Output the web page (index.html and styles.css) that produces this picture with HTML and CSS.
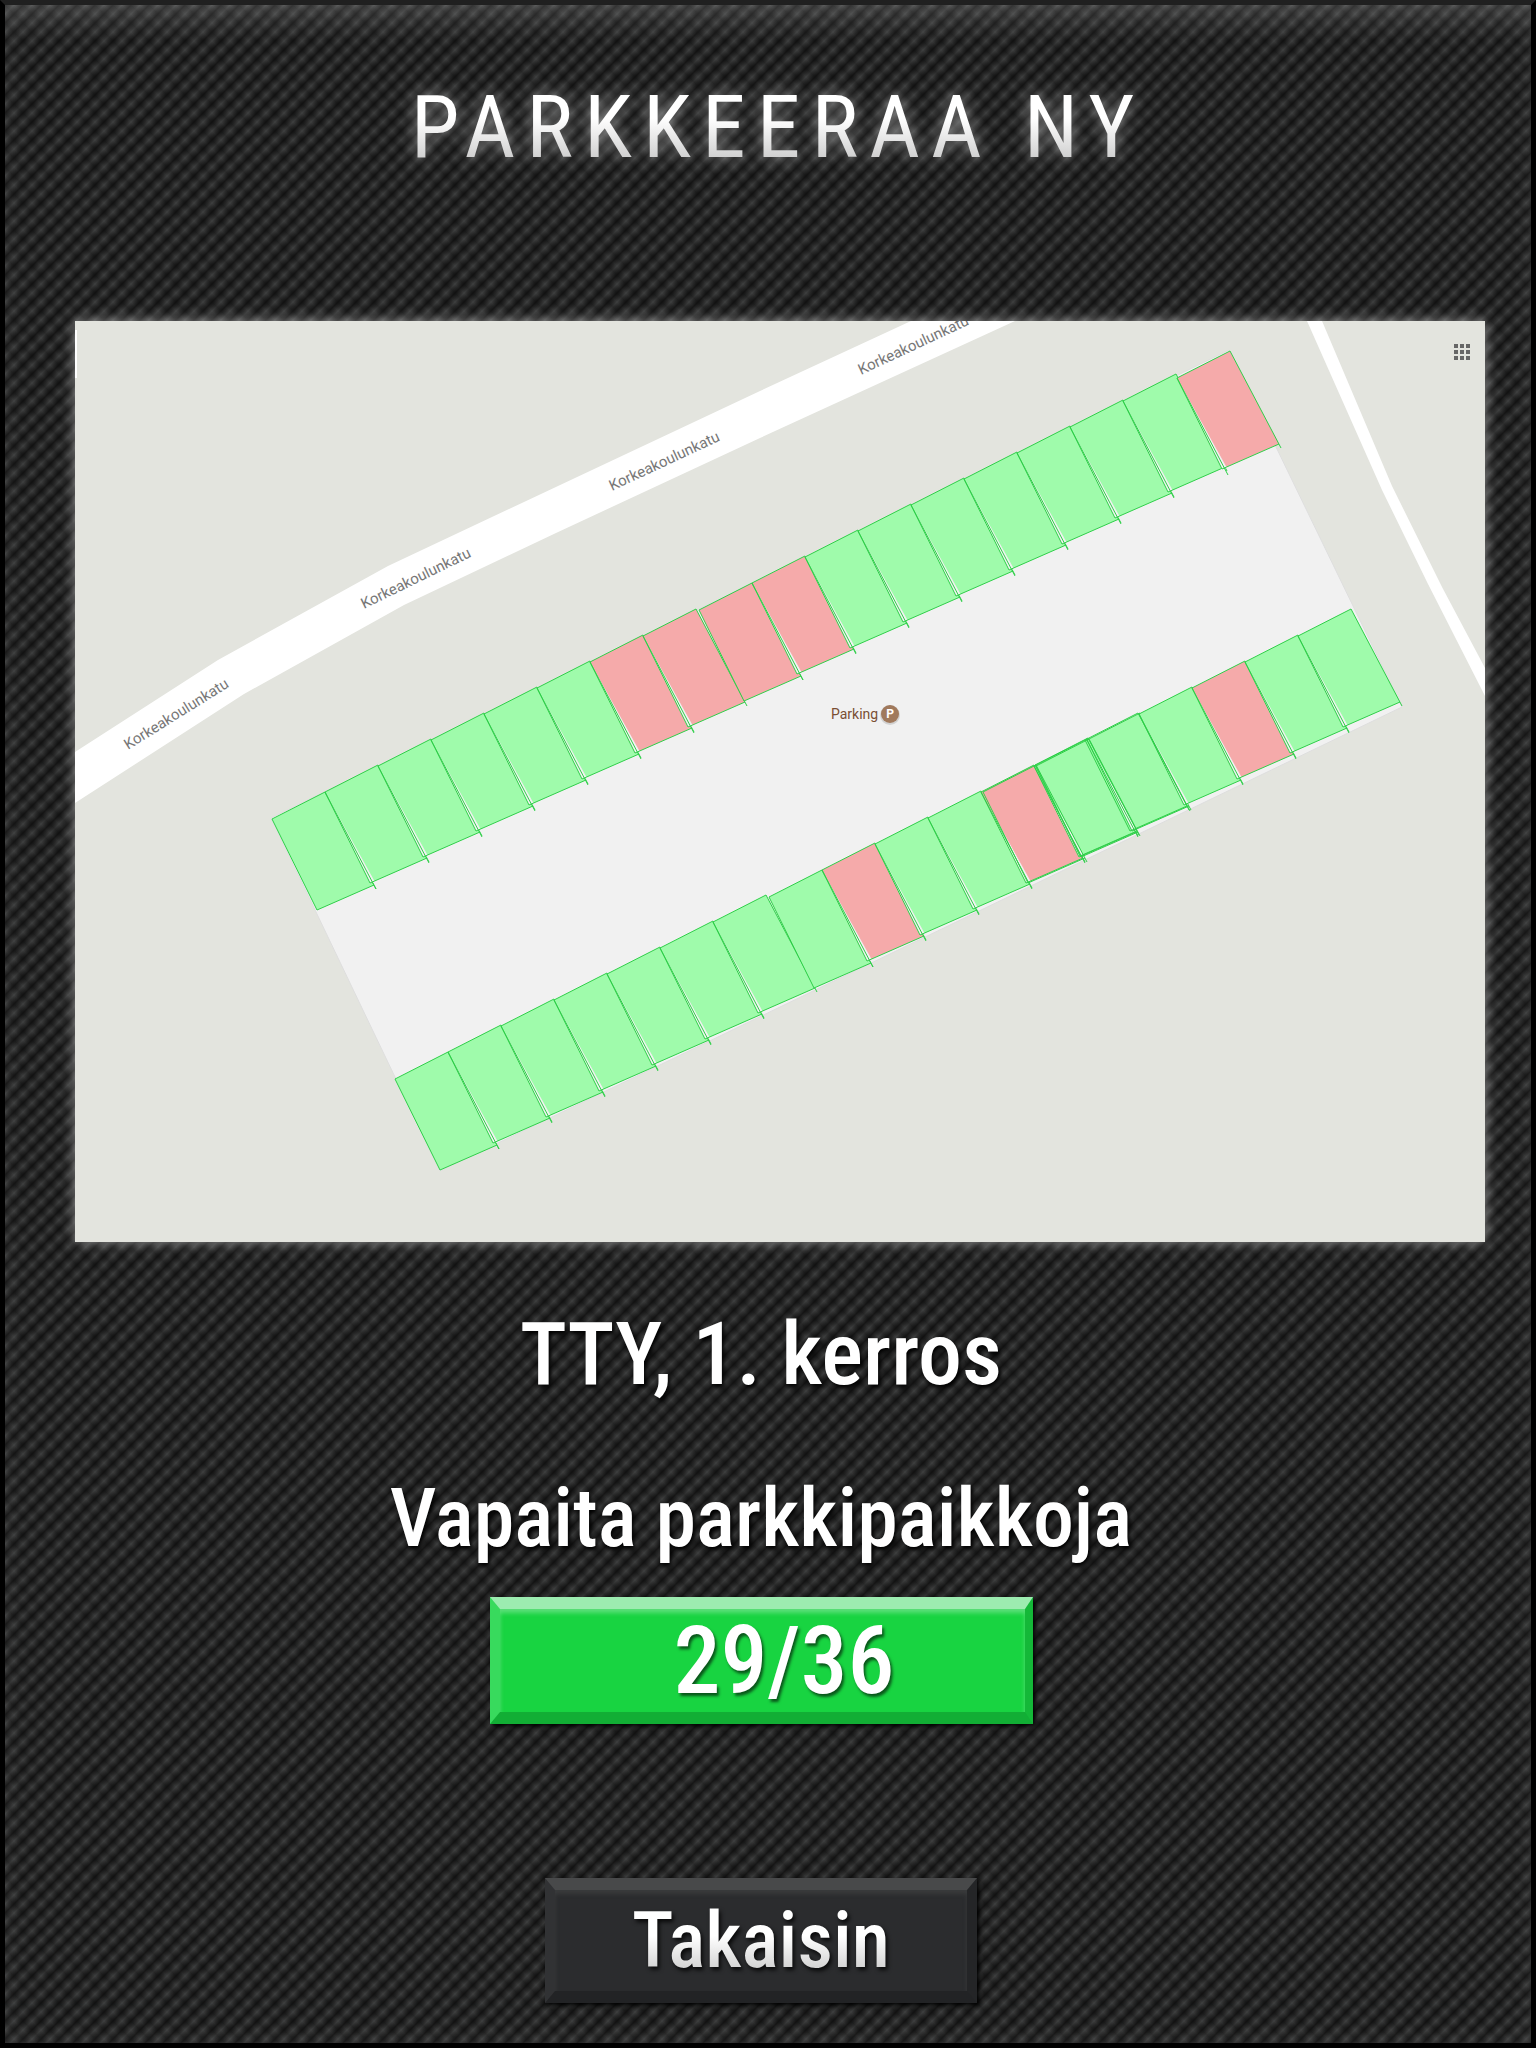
FILE: index.html
```
<!DOCTYPE html>
<html lang="fi">
<head>
<meta charset="utf-8">
<meta name="viewport" content="width=device-width, initial-scale=1">
<title>Parkkeeraa NY</title>
<link rel="stylesheet" href="styles.css">
</head>
<body>
<main class="screen">
  <h1 class="title">PARKKEERAA NY</h1>

  <svg class="map" viewBox="75 321 1410 921" role="img" aria-label="TTY, 1. kerros">
    <defs>
      <g id="lines">
        <path d="M0 0L45 91M0 0L53 -27L104 70M45 91L102 66"/>
      </g>
      <g id="first">
        <path class="fill" d="M0 0L53 -27L102 66L45 91Z"/>
        <use href="#lines"/>
      </g>
      <g id="stall">
        <path class="fill" d="M0 0L53 -27L102 66L45 91Z"/>
        <path class="gap" d="M0 0L45 91L50 90Z"/>
        <path d="M0 0L51 97"/>
        <use href="#lines"/>
      </g>
    </defs>

    <rect class="land" x="75" y="321" width="1410" height="921"/>
    <path class="road" d="M75 752L218 660L388 566L524 502L760 391L911 321H1015L760 438L556 533L404 605L244 694L75 803Z"/>
    <path class="road" d="M1307 321L1382 490L1428 584L1485 696V668L1442 587L1392 486L1322 321Z"/>
    <rect class="road" x="75" y="330" width="2" height="48"/>
    <path class="lot" d="M271 818L1229 350L1402 707L440 1171Z"/>

    <g class="stalls">
      <use href="#first" x="272" y="819"/>
      <use href="#stall" x="325" y="792"/>
      <use href="#stall" x="378" y="766"/>
      <use href="#stall" x="431" y="740"/>
      <use href="#stall" x="484" y="714"/>
      <use href="#stall" x="537" y="688"/>
      <use href="#stall" class="taken" x="590" y="662"/>
      <use href="#stall" class="taken" x="643" y="636"/>
      <use href="#first" class="taken" x="699" y="610"/>
      <use href="#stall" class="taken" x="752" y="583"/>
      <use href="#stall" x="805" y="557"/>
      <use href="#stall" x="858" y="531"/>
      <use href="#stall" x="911" y="505"/>
      <use href="#stall" x="964" y="479"/>
      <use href="#stall" x="1017" y="453"/>
      <use href="#stall" x="1070" y="427"/>
      <use href="#stall" x="1123" y="401"/>
      <use href="#stall" class="taken" x="1177" y="378"/>

      <use href="#first" x="395" y="1079"/>
      <use href="#stall" x="448" y="1052"/>
      <use href="#stall" x="501" y="1026"/>
      <use href="#stall" x="554" y="1000"/>
      <use href="#stall" x="607" y="974"/>
      <use href="#stall" x="660" y="948"/>
      <use href="#stall" x="713" y="922"/>
      <use href="#first" x="769" y="897"/>
      <use href="#stall" class="taken" x="822" y="870"/>
      <use href="#stall" x="875" y="844"/>
      <use href="#stall" x="928" y="818"/>
      <use href="#stall" class="taken" x="981" y="792"/>
      <use href="#stall" x="1034" y="766"/>
      <use href="#stall" x="1087" y="740"/>
      <use href="#stall" x="1139" y="714"/>
      <use href="#stall" class="taken" x="1192" y="688"/>
      <use href="#stall" x="1245" y="662"/>
      <use href="#stall" x="1298" y="636"/>
      <use href="#lines" x="983" y="792"/>
      <use href="#lines" x="1036" y="766"/>
      <use href="#lines" x="1035" y="765"/>
      <use href="#lines" x="1085" y="740"/>
    </g>

    <g class="street">
      <text transform="translate(128 750) rotate(-32)">Korkeakoulunkatu</text>
      <text transform="translate(364 609) rotate(-26)">Korkeakoulunkatu</text>
      <text transform="translate(612 491) rotate(-25)">Korkeakoulunkatu</text>
      <text transform="translate(861 375) rotate(-25)">Korkeakoulunkatu</text>
    </g>

    <text class="poi" x="831" y="719">Parking</text>
    <circle class="pin-shadow" cx="890" cy="715" r="10"/>
    <circle class="pin" cx="890" cy="714" r="9"/>
    <text class="pin-letter" x="890" y="718">P</text>

    <path class="grid" d="M1454 344h4v4h-4zm6 0h4v4h-4zm6 0h4v4h-4zm-12 6h4v4h-4zm6 0h4v4h-4zm6 0h4v4h-4zm-12 6h4v4h-4zm6 0h4v4h-4zm6 0h4v4h-4z"/>
  </svg>

  <section class="info">
    <h2 class="place">TTY, 1. kerros</h2>
    <p class="label">Vapaita parkkipaikkoja</p>
    <p class="count">29/36</p>
    <button class="back" type="button"><span class="back-text">Takaisin</span></button>
  </section>
</main>
</body>
</html>
```
FILE: styles.css
```
* {
  box-sizing: border-box;
}

body {
  margin: 0;
  background: #000;
  color: #fff;
  font-family: "Roboto Condensed", Roboto, "Liberation Sans", sans-serif;
}

.screen {
  display: flex;
  flex-direction: column;
  min-height: 100vh;
  padding-top: 78px;
  border: 5px solid #000;
  border-top-color: #202020;
  background-color: #222;
  background-image:
    linear-gradient(rgba(255, 255, 255, 0.12), rgba(255, 255, 255, 0) 36px),
    linear-gradient(45deg, rgba(0, 0, 0, 0.3), rgba(0, 0, 0, 0) 25%, rgba(0, 0, 0, 0.3) 50%, rgba(0, 0, 0, 0) 75%, rgba(0, 0, 0, 0.3)),
    linear-gradient(135deg, #181818, #3e3f3f 25%, #181818 50%, #3e3f3f 75%, #181818);
  background-size: auto, 18px 18px, 18px 18px;
  box-shadow: inset 0 0 24px rgba(255, 255, 255, 0.08);
}

.title {
  margin: 0 0 150px;
  padding-left: 20px;
  font-size: 88px;
  font-weight: 400;
  line-height: 88px;
  letter-spacing: 11px;
  text-align: center;
  color: transparent;
  background: linear-gradient(#fff 40%, #d0d0d0 85%);
  background-clip: text;
  filter: drop-shadow(0 0 8px rgba(255, 255, 255, 0.5));
}

.map {
  display: block;
  margin: 0 46px 0 70px;
  box-shadow: 0 0 12px rgba(255, 255, 255, 0.5);
}

.land { fill: #e3e4de; }
.road { fill: #fff; }
.lot { fill: #f1f1f1; stroke: #dedede; }

.stalls {
  color: #9ffbab;
  fill: none;
  stroke: #2fcf49;
}

.taken { color: #f5aaaa; }
.fill { fill: currentColor; stroke: none; }
.gap { fill: #f1f1f1; stroke: none; }

.street,
.poi,
.pin-letter {
  font-family: Roboto, "Liberation Sans", sans-serif;
}

.street {
  font-size: 15px;
  fill: #777;
}

.poi {
  font-size: 14px;
  fill: #7a4f33;
}

.pin-shadow { fill: #d2d2d2; }
.pin { fill: #a0795c; }

.pin-letter {
  font-size: 12px;
  font-weight: 700;
  text-anchor: middle;
  fill: #fff;
}

.grid { fill: #666; }

.info {
  display: flex;
  flex-direction: column;
  align-items: center;
  padding: 64px 14px 40px 0;
}

.place,
.label {
  margin: 0;
  font-weight: 500;
  line-height: 96px;
  text-align: center;
  text-shadow: 2px 3px 4px #000;
}

.place {
  margin-bottom: 68px;
  font-size: 88px;
}

.label {
  margin-bottom: 31px;
  font-size: 82px;
}

.count {
  display: flex;
  align-items: center;
  justify-content: center;
  width: 543px;
  max-width: 100%;
  height: 127px;
  margin: 0 0 154px;
  padding-left: 44px;
  border: solid;
  border-width: 12px 8px 12px 10px;
  border-color: #9cecb0 #14b838 #12ae35 #38da5d;
  background: #18d441;
  box-shadow:
    2px 2px 4px #000,
    inset 0 4px 4px rgba(156, 236, 176, 0.5);
  font-size: 94px;
  font-weight: 500;
  text-shadow: 2px 3px 3px rgba(0, 0, 0, 0.6);
}

.back {
  width: 432px;
  max-width: 100%;
  height: 125px;
  padding: 0;
  border: solid;
  border-width: 12px 10px;
  border-color: #48494a #242527 #222325 #313234;
  background: #2b2c2e;
  box-shadow:
    2px 2px 4px #000,
    inset 0 4px 4px rgba(72, 73, 74, 0.5);
  font: 500 78px/96px "Roboto Condensed", Roboto, "Liberation Sans", sans-serif;
  cursor: pointer;
}

.back-text {
  color: transparent;
  background: linear-gradient(#fff 45%, #d4d4d4 80%);
  background-clip: text;
  filter: drop-shadow(2px 3px 2px rgba(0, 0, 0, 0.8));
}
```
